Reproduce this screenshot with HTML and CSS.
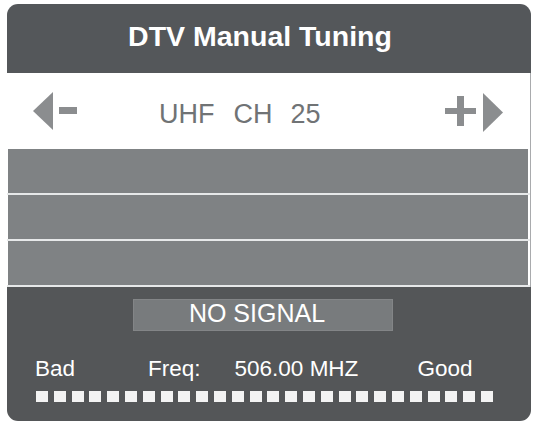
FILE: index.html
```html
<!DOCTYPE html>
<html>
<head>
<meta charset="utf-8">
<link rel="stylesheet" href="styles.css">
</head>
<body>
<div class="panel">
  <div class="header">DTV Manual Tuning</div>
  <div class="middle">
    <div class="channel">
      <svg class="ctl-left" width="44" height="38" viewBox="0 0 44 38">
        <polygon points="20,0 20,38 0,19" fill="#8b8d8f"/>
        <rect x="26" y="15" width="18" height="7" fill="#8b8d8f"/>
      </svg>
      <div class="ch-text"><span>UHF</span><span class="w2">CH</span><span class="w3">25</span></div>
      <svg class="ctl-right" width="58" height="39" viewBox="0 0 58 39">
        <rect x="0" y="15" width="31" height="6" fill="#8b8d8f"/>
        <rect x="12" y="3" width="7" height="30" fill="#8b8d8f"/>
        <polygon points="38,0 58,19.5 38,39" fill="#8b8d8f"/>
      </svg>
    </div>
    <div class="row"></div>
    <div class="sep"></div>
    <div class="row"></div>
    <div class="sep"></div>
    <div class="row"></div>
    <div class="sep"></div>
  </div>
  <div class="bottom">
    <div class="status">NO SIGNAL</div>
    <div class="labels">
      <span class="bad">Bad</span>
      <span class="freq">Freq:</span>
      <span class="val">506.00 MHZ</span>
      <span class="good">Good</span>
    </div>
    <div class="meter">
      <i></i><i></i><i></i><i></i><i></i><i></i><i></i><i></i><i></i><i></i><i></i><i></i><i></i>
      <i></i><i></i><i></i><i></i><i></i><i></i><i></i><i></i><i></i><i></i><i></i><i></i><i></i>
    </div>
  </div>
</div>
</body>
</html>
```
FILE: styles.css
```css
html, body {
  margin: 0;
  padding: 0;
  background: #ffffff;
}
body {
  font-family: "Liberation Sans", Arial, sans-serif;
}
.panel {
  margin: 4px 0 0 7px;
  width: 524px;
  display: flex;
  flex-direction: column;
}
.header {
  height: 69px;
  box-sizing: border-box;
  background: #54575a;
  border-radius: 11px 11px 0 0;
  color: #ffffff;
  font-weight: bold;
  font-size: 28.5px;
  line-height: 64px;
  padding: 0 18px 5px 0;
  text-align: center;
}
.middle {
  background: #ffffff;
  border-right: 1px solid #a9abad;
  display: flex;
  flex-direction: column;
}
.channel {
  height: 76px;
  display: flex;
  align-items: center;
  padding-left: 26px;
}
.ctl-left {
  display: block;
  flex: none;
}
.ch-text {
  display: flex;
  margin-left: 82px;
  margin-top: 7px;
  font-size: 27px;
  color: #707375;
  line-height: 31px;
  flex: 1;
}
.ch-text .w2 { margin-left: 19px; }
.ch-text .w3 { margin-left: 18px; }
.ctl-right {
  display: block;
  flex: none;
  margin-right: 27px;
  margin-top: 2px;
}
.row {
  height: 44px;
  background: #7f8284;
  margin: 0 2px 0 1px;
}
.sep {
  height: 2px;
  background: #e6e8e9;
}
.bottom {
  height: 134px;
  box-sizing: border-box;
  background: #545658;
  border-radius: 0 0 11px 11px;
  padding-top: 12px;
  display: flex;
  flex-direction: column;
}
.status {
  margin-left: 126px;
  width: 260px;
  height: 32px;
  box-sizing: border-box;
  background: #787b7d;
  border: 1px solid #838587;
  color: #ffffff;
  font-size: 25px;
  line-height: 27px;
  padding: 0 12px 4px 0;
  text-align: center;
}
.labels {
  display: flex;
  margin-top: 25px;
  padding-left: 28px;
  color: #ffffff;
  font-size: 22.5px;
  line-height: 25px;
}
.freq { margin-left: 73px; }
.val { margin-left: 34px; }
.good { margin-left: 59px; }
.meter {
  display: flex;
  justify-content: space-between;
  margin: 10px 0 0 29px;
  width: 457px;
}
.meter i {
  display: block;
  width: 12px;
  height: 11px;
  background: #f3f3f3;
}
```
